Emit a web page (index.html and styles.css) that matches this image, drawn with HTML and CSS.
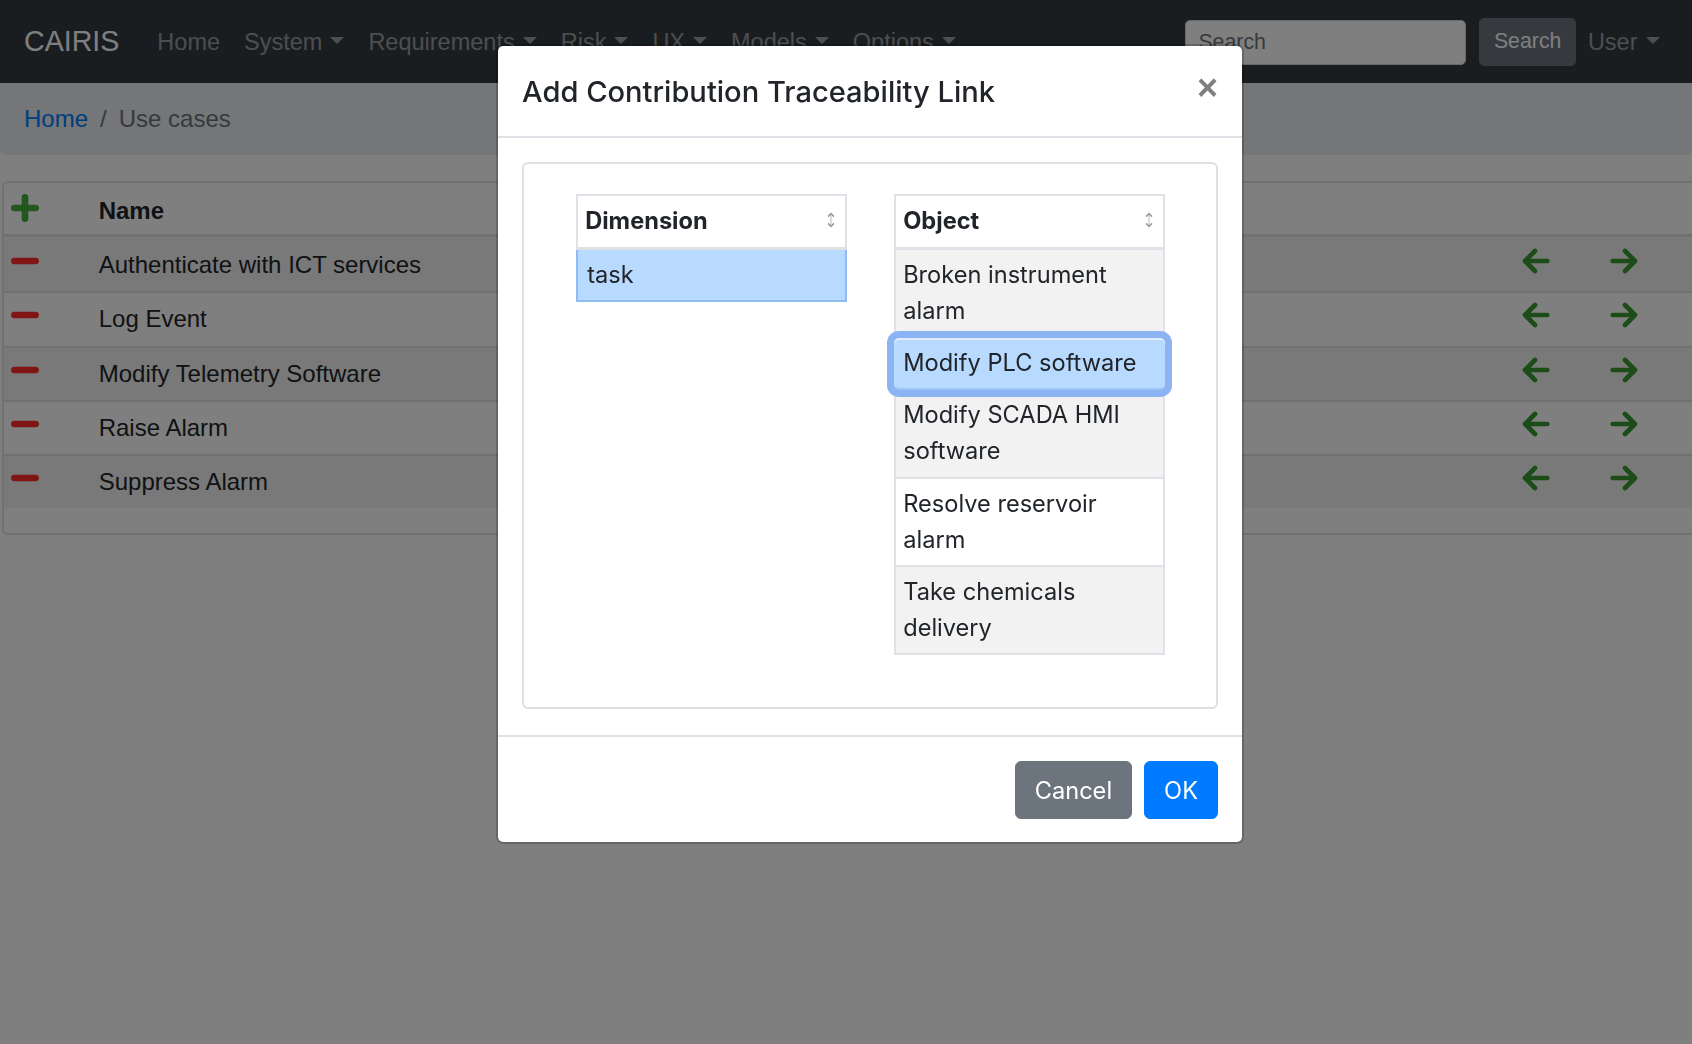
FILE: index.html
```html
<!DOCTYPE html>
<html lang="en">
<head>
<meta charset="utf-8">
<title>CAIRIS - Use cases</title>
<link rel="stylesheet" href="styles.css">
</head>
<body>
<nav class="navbar">
  <a class="brand" href="#">CAIRIS</a>
  <ul class="nav-list">
    <li><a class="nav-link" href="#">Home</a></li>
    <li><a class="nav-link dd" href="#">System</a></li>
    <li><a class="nav-link dd" href="#">Requirements</a></li>
    <li><a class="nav-link dd" href="#">Risk</a></li>
    <li><a class="nav-link dd" href="#">UX</a></li>
    <li><a class="nav-link dd" href="#">Models</a></li>
    <li><a class="nav-link dd" href="#">Options</a></li>
  </ul>
  <form class="search">
    <input class="search-input" type="text" placeholder="Search">
    <button class="search-btn" type="button">Search</button>
  </form>
  <a class="nav-link dd" href="#">User</a>
</nav>

<ol class="breadcrumb">
  <li class="crumb"><a href="#">Home</a></li>
  <li class="crumb active">Use cases</li>
</ol>

<div class="panel">
  <table class="uc-table">
    <colgroup><col class="c1"><col><col class="c3"><col class="c4"></colgroup>
    <thead>
      <tr>
        <th><svg class="icon icon-head add" viewBox="0 0 28 28"><path d="M14 3.3v21.4M3.3 14h21.4" fill="none" stroke="currentColor" stroke-width="6.6" stroke-linecap="round"/></svg></th>
        <th>Name</th><th></th><th></th>
      </tr>
    </thead>
    <tbody>
      <tr>
        <td><svg class="icon del" viewBox="0 0 28 28"><path d="M3.3 14h21.4" stroke="currentColor" stroke-width="6.4" stroke-linecap="round"/></svg></td>
        <td>Authenticate with ICT services</td>
        <td><svg class="icon nav-arrow" viewBox="0 0 28 28"><path d="M25.3 14H3M13 4L3 14l10 10" fill="none" stroke="currentColor" stroke-width="4.6" stroke-linecap="round" stroke-linejoin="round"/></svg></td>
        <td><svg class="icon nav-arrow" viewBox="0 0 28 28"><path d="M2.7 14H25M15 4l10 10-10 10" fill="none" stroke="currentColor" stroke-width="4.6" stroke-linecap="round" stroke-linejoin="round"/></svg></td>
      </tr>
      <tr>
        <td><svg class="icon del" viewBox="0 0 28 28"><path d="M3.3 14h21.4" stroke="currentColor" stroke-width="6.4" stroke-linecap="round"/></svg></td>
        <td>Log Event</td>
        <td><svg class="icon nav-arrow" viewBox="0 0 28 28"><path d="M25.3 14H3M13 4L3 14l10 10" fill="none" stroke="currentColor" stroke-width="4.6" stroke-linecap="round" stroke-linejoin="round"/></svg></td>
        <td><svg class="icon nav-arrow" viewBox="0 0 28 28"><path d="M2.7 14H25M15 4l10 10-10 10" fill="none" stroke="currentColor" stroke-width="4.6" stroke-linecap="round" stroke-linejoin="round"/></svg></td>
      </tr>
      <tr>
        <td><svg class="icon del" viewBox="0 0 28 28"><path d="M3.3 14h21.4" stroke="currentColor" stroke-width="6.4" stroke-linecap="round"/></svg></td>
        <td>Modify Telemetry Software</td>
        <td><svg class="icon nav-arrow" viewBox="0 0 28 28"><path d="M25.3 14H3M13 4L3 14l10 10" fill="none" stroke="currentColor" stroke-width="4.6" stroke-linecap="round" stroke-linejoin="round"/></svg></td>
        <td><svg class="icon nav-arrow" viewBox="0 0 28 28"><path d="M2.7 14H25M15 4l10 10-10 10" fill="none" stroke="currentColor" stroke-width="4.6" stroke-linecap="round" stroke-linejoin="round"/></svg></td>
      </tr>
      <tr>
        <td><svg class="icon del" viewBox="0 0 28 28"><path d="M3.3 14h21.4" stroke="currentColor" stroke-width="6.4" stroke-linecap="round"/></svg></td>
        <td>Raise Alarm</td>
        <td><svg class="icon nav-arrow" viewBox="0 0 28 28"><path d="M25.3 14H3M13 4L3 14l10 10" fill="none" stroke="currentColor" stroke-width="4.6" stroke-linecap="round" stroke-linejoin="round"/></svg></td>
        <td><svg class="icon nav-arrow" viewBox="0 0 28 28"><path d="M2.7 14H25M15 4l10 10-10 10" fill="none" stroke="currentColor" stroke-width="4.6" stroke-linecap="round" stroke-linejoin="round"/></svg></td>
      </tr>
      <tr>
        <td><svg class="icon del" viewBox="0 0 28 28"><path d="M3.3 14h21.4" stroke="currentColor" stroke-width="6.4" stroke-linecap="round"/></svg></td>
        <td>Suppress Alarm</td>
        <td><svg class="icon nav-arrow" viewBox="0 0 28 28"><path d="M25.3 14H3M13 4L3 14l10 10" fill="none" stroke="currentColor" stroke-width="4.6" stroke-linecap="round" stroke-linejoin="round"/></svg></td>
        <td><svg class="icon nav-arrow" viewBox="0 0 28 28"><path d="M2.7 14H25M15 4l10 10-10 10" fill="none" stroke="currentColor" stroke-width="4.6" stroke-linecap="round" stroke-linejoin="round"/></svg></td>
      </tr>
    </tbody>
  </table>
</div>

<div class="backdrop"></div>

<div class="modal">
  <div class="modal-dialog">
    <div class="modal-content">
      <div class="modal-header">
        <h5 class="modal-title">Add Contribution Traceability Link</h5>
        <button class="close" type="button">&times;</button>
      </div>
      <div class="modal-body">
        <div class="pick-box">
          <div class="pick-list">
            <div class="pick-head"><span>Dimension</span><svg class="sort" viewBox="0 0 10 18"><path d="M5 3v12" stroke="#cfcfcf" stroke-width="1.4"/><path d="M2 5.6l3-3 3 3M2 12.4l3 3 3-3" fill="none" stroke="#9c9c9c" stroke-width="1.5"/></svg></div>
            <div class="pick-row primary">task</div>
          </div>
          <div class="pick-list">
            <div class="pick-head"><span>Object</span><svg class="sort" viewBox="0 0 10 18"><path d="M5 3v12" stroke="#cfcfcf" stroke-width="1.4"/><path d="M2 5.6l3-3 3 3M2 12.4l3 3 3-3" fill="none" stroke="#9c9c9c" stroke-width="1.5"/></svg></div>
            <div class="pick-row odd">Broken instrument alarm</div>
            <div class="pick-row focus">Modify PLC software</div>
            <div class="pick-row odd">Modify SCADA HMI software</div>
            <div class="pick-row">Resolve reservoir alarm</div>
            <div class="pick-row odd">Take chemicals delivery</div>
          </div>
        </div>
      </div>
      <div class="modal-footer">
        <button class="btn btn-cancel" type="button">Cancel</button>
        <button class="btn btn-ok" type="button">OK</button>
      </div>
    </div>
  </div>
</div>
</body>
</html>
```
FILE: styles.css
```css
* { box-sizing: border-box; }

html, body {
  margin: 0;
  height: 100%;
  overflow: hidden;
}

body {
  font-family: "Liberation Sans", Arial, Helvetica, sans-serif;
  font-size: 24px;
  line-height: 1.5;
  color: #212529;
  background: #fff;
}

/* ---------- navbar ---------- */
.navbar {
  display: flex;
  align-items: center;
  height: 83px;
  padding: 0 20.5px 0 24px;
  background: #343a40;
}

.brand {
  font-size: 28.6px;
  line-height: 45px;
  color: #fff;
  margin-right: 26px;
  text-decoration: none;
}

.nav-list {
  display: flex;
  list-style: none;
  margin: 0;
  padding: 0;
}

.nav-link {
  display: block;
  padding: 0 12px;
  font-size: 23.5px;
  line-height: 36px;
  color: rgba(255, 255, 255, .5);
  text-decoration: none;
}

.dd::after {
  content: "";
  display: inline-block;
  margin-left: 8px;
  vertical-align: .255em;
  border-top: .3em solid;
  border-right: .3em solid transparent;
  border-left: .3em solid transparent;
}

.search {
  display: flex;
  align-items: center;
  margin: 0 0 0 auto;
}

.search-input {
  width: 281px;
  height: 45px;
  margin: 2px 13px 0 0;
  padding: 0 12px;
  font-family: "Liberation Sans", Arial, sans-serif;
  font-size: 21.3px;
  color: #495057;
  background: #fff;
  border: 1.5px solid #ced4da;
  border-radius: 5px;
}

.search-input::placeholder { color: #6c757d; }

.search-btn {
  height: 48px;
  padding: 0 13.5px;
  font-family: "Liberation Sans", Arial, sans-serif;
  font-size: 21.3px;
  color: #fff;
  background: #6c757d;
  border: 1.5px solid #6c757d;
  border-radius: 5px;
}

/* ---------- breadcrumb ---------- */
.breadcrumb {
  display: flex;
  list-style: none;
  margin: 0 0 26px;
  padding: 18px 24px;
  line-height: 36px;
  background: #e9ecef;
  border-radius: 0 0 6px 6px;
}

.crumb a { color: #007bff; text-decoration: none; }
.crumb + .crumb::before {
  content: "/";
  padding: 0 12px;
  color: #6c757d;
}
.crumb.active { color: #6c757d; }

/* ---------- use case table ---------- */
.panel {
  margin: 0 -8px 0 2px;
  padding-bottom: 25px;
  border: 2px solid #dee2e6;
  border-radius: 6px;
}

.uc-table {
  width: 100%;
  border-spacing: 0;
  table-layout: fixed;
  font-size: 24px;
  line-height: 36px;
  color: #212529;
}

.uc-table .c1 { width: 87.7px; }
.uc-table .c3 { width: 88.5px; }
.uc-table .c4 { width: 95px; }

.uc-table th {
  text-align: left;
  vertical-align: top;
  font-weight: 700;
  padding: 10px 7px 5px;
  border-bottom: 3px solid #dee2e6;
}

.uc-table td {
  vertical-align: top;
  padding: 8px 7px 8.3px;
  border-top: 2px solid #dee2e6;
}

.uc-table tbody tr:first-child td {
  border-top: 0;
  padding-top: 10px;
}

.uc-table tbody tr:nth-child(odd) td { background: rgba(0, 0, 0, .05); }

.icon {
  display: block;
  width: 28px;
  height: 28px;
}
.icon-head { margin-top: 1px; }
.add { color: #44b03c; }
.nav-arrow { color: #38982e; }
.del { color: #ff2a2a; }

/* ---------- modal ---------- */
.backdrop {
  position: fixed;
  inset: 0;
  z-index: 1040;
  background: #000;
  opacity: .5;
}

.modal {
  position: fixed;
  inset: 0;
  z-index: 1050;
  font-family: Inter, "Liberation Sans", sans-serif;
  font-size: 23.6px;
  line-height: 36px;
  color: #212529;
}

.modal-dialog {
  width: 748px;
  margin: 44px 0 0 496px;
}

.modal-content {
  background: #fff;
  background-clip: padding-box;
  border: 2px solid rgba(0, 0, 0, .2);
  border-radius: 7px;
}

.modal-header {
  display: flex;
  align-items: flex-start;
  padding: 23px 24px 22px;
  border-bottom: 2px solid #dee2e6;
}

.modal-title {
  margin: 0;
  font-size: 29.1px;
  font-weight: 500;
  line-height: 45px;
}

.close {
  margin: 1px 0 0 auto;
  padding: 0;
  font-family: "Liberation Sans", Arial, sans-serif;
  font-size: 36px;
  font-weight: 700;
  line-height: 1;
  color: #000;
  opacity: .5;
  background: none;
  border: 0;
}

.modal-body { padding: 24px 24px 26px; }

.pick-box {
  display: flex;
  align-items: flex-start;
  gap: 47px;
  padding: 30px 30px 52px 52px;
  border: 2px solid #dfdfdf;
  border-radius: 6px;
}

.pick-list {
  width: 271px;
  border: 2px solid #dee2e6;
  border-bottom: 0;
}

.pick-head {
  display: flex;
  align-items: center;
  justify-content: space-between;
  padding: 7px 9px 7.5px 7.2px;
  font-weight: 700;
  border-bottom: 3px solid #dee2e6;
}

.sort {
  width: 10px;
  height: 18px;
  margin-top: -2px;
}

.pick-row {
  padding: 7.2px;
  border-bottom: 2px solid #dee2e6;
}

.pick-row.odd { background: #f2f2f2; }

.pick-row.primary {
  margin: 0 -2px;
  padding-left: 9.2px;
  background: #b8daff;
  border: 2px solid #8fbcf4;
  border-top: 0;
}

.pick-row.focus {
  position: relative;
  z-index: 1;
  margin: 0 -2px;
  padding-left: 9.2px;
  background: #b8daff;
  border-bottom: 2px solid #9fc5f5;
  border-radius: 5px;
  box-shadow: 0 0 0 7px #8cb4f2, inset 0 2px 0 #dfecfc;
}

.modal-footer {
  display: flex;
  justify-content: flex-end;
  gap: 12px;
  padding: 24px 24px 23px;
  border-top: 2px solid #dee2e6;
}

.btn {
  height: 58px;
  padding: 0 19px;
  font-family: Inter, "Liberation Sans", sans-serif;
  font-size: 23.6px;
  color: #fff;
  border: 1.5px solid transparent;
  border-radius: 6px;
}

.btn-cancel { background: #6c757d; border-color: #6c757d; }
.btn-ok { background: #007bff; border-color: #007bff; }
```
